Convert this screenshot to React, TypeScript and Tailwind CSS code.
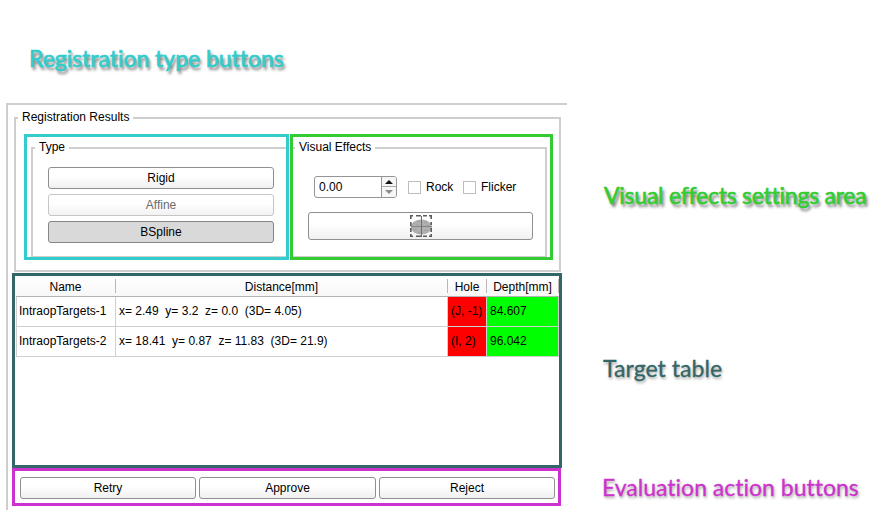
import type { ReactNode } from "react";

function GroupBox({ title, className, children }: { title: string; className: string; children: ReactNode }) {
  return (
    <fieldset className={`min-w-0 border-[#cecece] ${className}`}>
      <legend className="ml-[2px] h-4 px-1 leading-[15px] whitespace-nowrap">{title}</legend>
      {children}
    </fieldset>
  );
}

const tones = {
  normal: "border-[#8f8f8f] bg-linear-to-b from-white from-40% to-[#f0f0f0]",
  disabled: "border-[#c6c6c6] bg-linear-to-b from-white from-40% to-[#f2f2f2] text-[#6b6b6b]",
  pressed: "border-[#858585] bg-[#d9d9d9]",
};

function PushButton({
  children,
  tone = "normal",
  className = "h-[22px]",
}: {
  children: ReactNode;
  tone?: keyof typeof tones;
  className?: string;
}) {
  return (
    <button className={`flex items-center justify-center rounded-[3px] border leading-none ${tones[tone]} ${className}`}>
      {children}
    </button>
  );
}

function CheckOption({ label }: { label: string }) {
  return (
    <label className="flex items-center gap-[5px]">
      <span className="size-[13px] border border-[#bdbdbd] bg-white" />
      {label}
    </label>
  );
}

function RegionIcon() {
  return (
    <svg width="22" height="22" viewBox="0 0 22 22" fill="none">
      <ellipse cx="11.3" cy="12" rx="10.6" ry="7.6" fill="#b0b0b0" />
      <path d="M3 8.5h2M7 6.5h3M14 7.5h3M4 14.5h3M8 17.5h2M14 15.5h4M16 10.5h3M6 9.5h2" stroke="#a2a2a2" />
      <path d="M1 11.5h21" stroke="#858585" />
      <path d="M11.5 1v21" stroke="#6c6c6c" />
      <path d="M0 .8h3M6 .8h5M13 .8h4M19 .8h3M0 21.2h3M6 21.2h5M13 21.2h4M19 21.2h3" stroke="#5c5c5c" strokeWidth="1.6" />
      <path d="M.8 0v4M.8 7v4M.8 13v4M.8 19v3M21.2 0v4M21.2 7v3M21.2 13v4M21.2 19v3" stroke="#5c5c5c" strokeWidth="1.6" />
    </svg>
  );
}

const columns = [
  { title: "Name", width: "w-[100px]" },
  { title: "Distance[mm]", width: "w-[332px]" },
  { title: "Hole", width: "w-[39px]" },
  { title: "Depth[mm]", width: "w-[72px]" },
];

const targets = [
  { name: "IntraopTargets-1", distance: "x= 2.49  y= 3.2  z= 0.0  (3D= 4.05)", hole: "(J, -1)", depth: "84.607" },
  { name: "IntraopTargets-2", distance: "x= 18.41  y= 0.87  z= 11.83  (3D= 21.9)", hole: "(I, 2)", depth: "96.042" },
];

function TargetTable() {
  return (
    <div className="ml-1 h-[195px] w-[550px] border-[3px] border-[#336666] pl-px">
      <div className="flex h-[21px] w-[543px] items-center border-b border-[#b4b4b4] bg-linear-to-b from-white to-[#f7f7f7]">
        {columns.map((c) => (
          <div
            key={c.title}
            className={`flex h-[14px] items-center justify-center border-r border-[#b8b8b8] pt-[2px] leading-[12px] ${c.width}`}
          >
            {c.title}
          </div>
        ))}
      </div>
      {targets.map((t) => (
        <div key={t.name} className="flex h-[30px] w-[543px] border-b border-l border-[#cfcfcf] leading-[28px] whitespace-pre">
          <div className="w-[99px] border-r border-[#cfcfcf] pl-[2px]">{t.name}</div>
          <div className="w-[332px] border-r border-[#cfcfcf] pl-[3px]">{t.distance}</div>
          <div className="w-[39px] border-r border-[#cfcfcf] bg-[#ff0000] pl-[3px]">{t.hole}</div>
          <div className="w-[72px] border-r border-[#cfcfcf] bg-[#00ff00] pl-[3px]">{t.depth}</div>
        </div>
      ))}
    </div>
  );
}

export default function App() {
  return (
    <div className="flex h-[510px] w-[892px] overflow-hidden bg-white font-['Liberation_Sans',Arial,sans-serif] text-[12px] text-black">
      <div className="flex w-[567px] flex-col pl-[6px]">
        <h2 className="h-[103px] pt-[43px] pl-[23px] font-['Lato',sans-serif] text-[23px] leading-[30px] tracking-[-0.03px] whitespace-nowrap text-[#33cccc] [font-variant-ligatures:none] [-webkit-text-stroke:0.7px_#33cccc] [text-shadow:2px_3px_3px_#00000090]">
          Registration type buttons
        </h2>
        <section className="h-[407px] border-t-2 border-l-2 border-[#cecece] pt-[5px]">
          <GroupBox title="Registration Results" className="ml-[6px] h-[162px] w-[547px] border-2">
            <div className="flex gap-px pt-2 pl-2">
              <div className="h-[126px] w-[265px] border-[3px] border-[#33cccc] pt-[3px] pl-1">
                <GroupBox title="Type" className="h-[117px] border-2 border-r-0 border-b">
                  <div className="flex w-[241px] flex-col gap-[5px] pt-[11px] pl-[15px]">
                    <PushButton>Rigid</PushButton>
                    <PushButton tone="disabled">Affine</PushButton>
                    <PushButton tone="pressed">BSpline</PushButton>
                  </div>
                </GroupBox>
              </div>
              <div className="h-[126px] w-[263px] border-[3px] border-[#33cc33] pt-[3px]">
                <GroupBox title="Visual Effects" className="h-[117px] w-[254px] border-2 border-b border-l-0">
                  <div className="flex h-[42px] items-end pl-[21px]">
                    <div className="flex h-[22px] w-[83px] overflow-hidden rounded-[3px] border border-[#959595]">
                      <span className="flex-1 pl-1 leading-[20px]">0.00</span>
                      <span className="flex w-[15px] flex-col border-l border-[#959595] bg-[#f6f6f6]">
                        <span className="flex h-[10px] items-center justify-center border-b border-[#aaaaaa]">
                          <svg width="8" height="4"><path d="M0 4L4 0L8 4Z" fill="#111" /></svg>
                        </span>
                        <span className="flex h-[10px] items-center justify-center">
                          <svg width="8" height="4"><path d="M0 0L4 4L8 0Z" fill="#8c8c8c" /></svg>
                        </span>
                      </span>
                    </div>
                    <div className="ml-[11px] flex h-[22px] items-center">
                      <div className="w-[55px]"><CheckOption label="Rock" /></div>
                      <CheckOption label="Flicker" />
                    </div>
                  </div>
                  <div className="pt-[14px] pl-[15px]">
                    <PushButton className="h-[28px] w-[225px]"><RegionIcon /></PushButton>
                  </div>
                </GroupBox>
              </div>
            </div>
          </GroupBox>
          <div className="h-px" />
          <TargetTable />
          <div className="ml-1 flex h-[38px] w-[549px] gap-[3px] border-[3px] border-[#cc33cc] pt-[6px] pl-[5px]">
            <PushButton className="h-[22px] w-[176px]">Retry</PushButton>
            <PushButton className="h-[22px] w-[177px]">Approve</PushButton>
            <PushButton className="h-[22px] w-[176px]">Reject</PushButton>
          </div>
        </section>
      </div>
      <aside className="flex flex-col pl-[36px] font-['Lato',sans-serif] text-[23px] leading-[30px] whitespace-nowrap [font-variant-ligatures:none]">
        <h2 className="mt-[180px] ml-px tracking-[-0.24px] text-[#33cc33] [-webkit-text-stroke:0.7px_#33cc33] [text-shadow:2px_3px_3px_#00000090]">
          Visual effects settings area
        </h2>
        <h2 className="mt-[143px] tracking-[0.05px] text-[#336666] [-webkit-text-stroke:0.3px_#336666] [text-shadow:1px_2px_3px_#00000060]">
          Target table
        </h2>
        <h2 className="mt-[89px] -ml-px text-[#cc33cc] [-webkit-text-stroke:0.3px_#cc33cc] [text-shadow:1px_2px_3px_#00000060]">
          Evaluation action buttons
        </h2>
      </aside>
    </div>
  );
}
